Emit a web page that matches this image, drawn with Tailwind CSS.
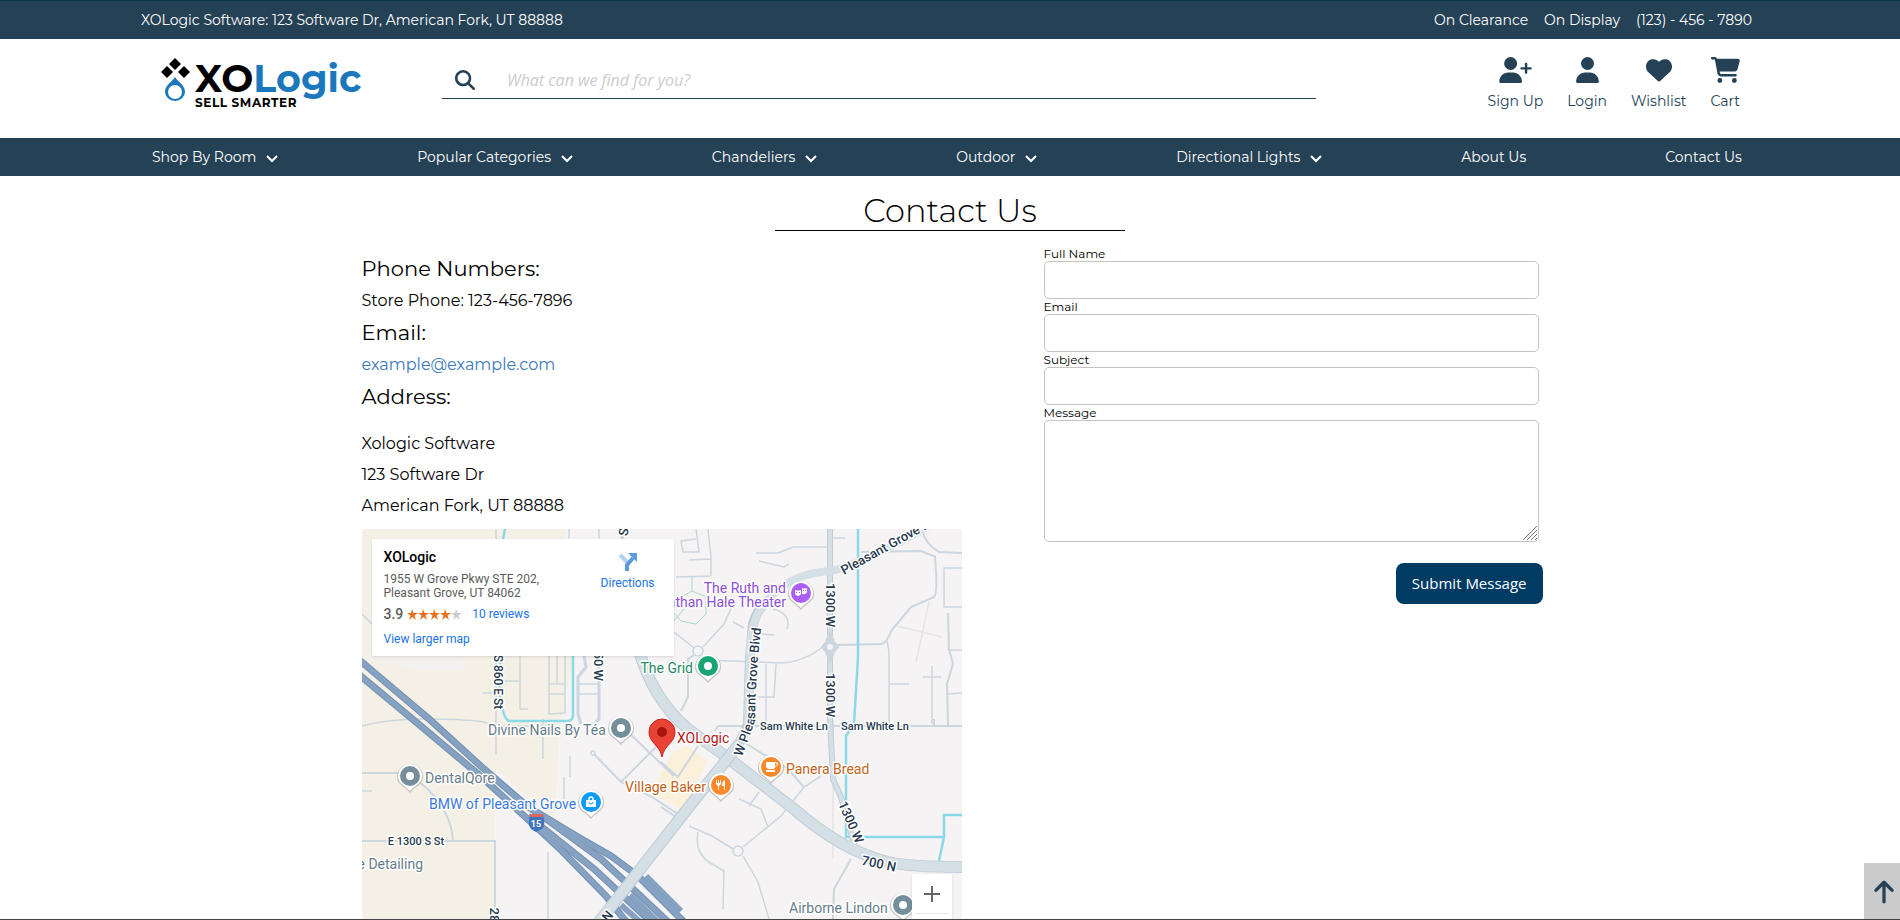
<!DOCTYPE html>
<html lang="en">
<head>
  <meta charset="UTF-8">
  <meta name="viewport" content="width=device-width, initial-scale=1.0">
  <title>Contact Us | XOLogic</title>
  <script src="https://cdn.jsdelivr.net/npm/@tailwindcss/browser@4"></script>
</head>
<body class="bg-white text-black font-[Montserrat,Inter,sans-serif]">
<div class="h-screen overflow-hidden">

  <!-- Top bar -->
  <div class="flex h-[39px] items-center justify-between border-t border-[#0c3443] bg-[#254156] pr-[148px] pl-[141px] text-sm text-white">
    <span>XOLogic Software: 123 Software Dr, American Fork, UT 88888</span>
    <div class="flex gap-4">
      <a href="#">On Clearance</a>
      <a href="#">On Display</a>
      <a href="#">(123) - 456 - 7890</a>
    </div>
  </div>

  <!-- Header -->
  <header class="flex h-[99px] items-start px-40 pt-[18px] text-[#254156]">
    <a href="#" aria-label="XOLogic" class="block shrink-0">
      <svg class="h-[56px] w-[202px] overflow-visible" viewBox="0 0 202 56">
        <g fill="#000">
          <path d="M15 1l6 6-6 6-6-6z"/>
          <path d="M7 9l6 6-6 6-6-6z"/>
          <path d="M24 9l6 6-6 6-6-6z"/>
        </g>
        <path fill="#1b78bd" fill-rule="evenodd" d="M15 20c3 5 10 8 10 15a10 9 0 0 1-20 0c0-7 7-10 10-15zm0 8a7 7 0 1 0 0 14 7 7 0 1 0 0-14z"/>
        <text x="35" y="35" font-family="Montserrat, Lato, sans-serif" font-weight="700" font-size="38">XO<tspan fill="#1b78bd">Logic</tspan></text>
        <text x="35" y="50" font-family="Montserrat, Lato, sans-serif" font-weight="700" font-size="12" class="tracking-wider">SELL SMARTER</text>
      </svg>
    </a>
    <form class="mr-[172px] ml-20 flex h-[42px] flex-1 items-center border-b border-[#254156] pt-1 pl-[13px]">
      <button type="button" aria-label="Search">
        <svg class="size-5" viewBox="0 0 512 512" fill="currentColor"><path d="M416 208c0 45.900-14.900 88.300-40 122.700L502.600 457.400c12.500 12.500 12.500 32.800 0 45.300s-32.800 12.500-45.300 0L330.700 376c-34.400 25.200-76.800 40-122.700 40C93.100 416 0 322.900 0 208S93.100 0 208 0S416 93.100 416 208zM208 352a144 144 0 1 0 0-288 144 144 0 1 0 0 288z"/></svg>
      </button>
      <input type="text" aria-label="Search products" placeholder="What can we find for you?" class="ml-8 flex-1 font-['Open_Sans',sans-serif] text-base italic outline-none placeholder:text-[#cccccc]">
    </form>
    <nav class="flex gap-6 text-sm">
      <a href="#" class="flex flex-col items-center gap-2">
        <svg class="h-[26px] w-[33px]" viewBox="0 0 640 512" fill="currentColor"><path d="M96 128a128 128 0 1 1 256 0A128 128 0 1 1 96 128zM0 482.300C0 383.800 79.800 304 178.300 304h91.400C368.200 304 448 383.800 448 482.300c0 16.400-13.300 29.700-29.700 29.700H29.700C13.300 512 0 498.700 0 482.300zM504 312V248H440c-13.300 0-24-10.700-24-24s10.700-24 24-24h64V136c0-13.300 10.700-24 24-24s24 10.700 24 24v64h64c13.300 0 24 10.700 24 24s-10.700 24-24 24H552v64c0 13.300-10.700 24-24 24s-24-10.700-24-24z"/></svg>
        Sign Up
      </a>
      <a href="#" class="flex flex-col items-center gap-2">
        <svg class="h-[26px] w-[23px]" viewBox="0 0 448 512" fill="currentColor"><path d="M224 256A128 128 0 1 0 224 0a128 128 0 1 0 0 256zm-45.700 48C79.800 304 0 383.800 0 482.300C0 498.700 13.300 512 29.700 512H418.300c16.400 0 29.700-13.300 29.700-29.700C448 383.800 368.200 304 269.700 304H178.300z"/></svg>
        Login
      </a>
      <a href="#" class="flex flex-col items-center gap-2">
        <svg class="size-[26px]" viewBox="0 0 512 512" fill="currentColor"><path d="M47.600 300.400L228.300 469.100c7.500 7 17.400 10.900 27.700 10.900s20.200-3.900 27.700-10.900L464.400 300.400c30.400-28.300 47.600-68 47.600-109.500v-5.800c0-69.900-50.500-129.500-119.400-141C347 36.500 300.600 51.400 268 84L256 96 244 84c-32.600-32.600-79-47.500-124.600-39.900C50.500 55.600 0 115.200 0 185.100v5.800c0 41.500 17.200 81.200 47.600 109.500z"/></svg>
        Wishlist
      </a>
      <a href="#" class="flex flex-col items-center gap-2">
        <svg class="h-[26px] w-[29px]" viewBox="0 0 576 512" fill="currentColor"><path d="M0 24C0 10.700 10.700 0 24 0H69.500c22 0 41.500 12.800 50.600 32h411c26.300 0 45.500 25 38.600 50.400l-41 152.300c-8.500 31.400-37 53.300-69.500 53.300H170.700l5.400 28.500c2.200 11.300 12.100 19.500 23.600 19.500H488c13.300 0 24 10.700 24 24s-10.700 24-24 24H199.700c-34.600 0-64.300-24.600-70.700-58.500L77.400 54.500c-.7-3.800-4-6.500-7.900-6.500H24C10.700 48 0 37.300 0 24zM128 464a48 48 0 1 1 96 0 48 48 0 1 1 -96 0zm336-48a48 48 0 1 1 0 96 48 48 0 1 1 0-96z"/></svg>
        Cart
      </a>
    </nav>
  </header>

  <!-- Category menu -->
  <nav class="flex h-[38px] items-center justify-between bg-[#254156] pr-[158px] pl-[152px] text-sm text-white">
    <a href="#" class="flex items-center gap-[10px]">Shop By Room <svg class="mt-1 h-2 w-3" viewBox="0 0 12 8" fill="none" stroke="currentColor" stroke-width="2"><path d="M1 1l5 5 5-5"/></svg></a>
    <a href="#" class="flex items-center gap-[10px]">Popular Categories <svg class="mt-1 h-2 w-3" viewBox="0 0 12 8" fill="none" stroke="currentColor" stroke-width="2"><path d="M1 1l5 5 5-5"/></svg></a>
    <a href="#" class="flex items-center gap-[10px]">Chandeliers <svg class="mt-1 h-2 w-3" viewBox="0 0 12 8" fill="none" stroke="currentColor" stroke-width="2"><path d="M1 1l5 5 5-5"/></svg></a>
    <a href="#" class="flex items-center gap-[10px]">Outdoor <svg class="mt-1 h-2 w-3" viewBox="0 0 12 8" fill="none" stroke="currentColor" stroke-width="2"><path d="M1 1l5 5 5-5"/></svg></a>
    <a href="#" class="flex items-center gap-[10px]">Directional Lights <svg class="mt-1 h-2 w-3" viewBox="0 0 12 8" fill="none" stroke="currentColor" stroke-width="2"><path d="M1 1l5 5 5-5"/></svg></a>
    <a href="#">About Us</a>
    <a href="#">Contact Us</a>
  </nav>

  <main>
    <h1 class="mx-auto mt-4 w-[350px] border-b border-black text-center text-[32px] leading-[38px] font-light">Contact Us</h1>

    <div class="flex justify-center gap-[82px] pt-[15px]">
      <!-- Store details -->
      <section class="w-[600px] pt-[6px]">
        <h2 class="text-[21px] leading-[34px]">Phone Numbers:</h2>
        <p class="leading-[30px]">Store Phone: 123-456-7896</p>
        <h2 class="text-[21px] leading-[34px]">Email:</h2>
        <p class="leading-[30px]"><a href="mailto:example@example.com" class="text-[#3b78bb]">example@example.com</a></p>
        <h2 class="text-[21px] leading-[34px]">Address:</h2>
        <address class="pt-[14px] leading-[31px] not-italic">
          Xologic Software<br>
          123 Software Dr<br>
          American Fork, UT 88888
        </address>

        <!-- Map -->
        <div class="relative mt-2 h-[450px] overflow-hidden bg-[#f5f3f4] font-[Roboto,sans-serif]">
          <svg class="h-[450px] w-[600px]" viewBox="0 0 600 450">
            <defs>
              <g id="pin">
                <path d="M-13 0a13 13 0 1 1 26 0c0 8-8 9-13 16c-5-7-13-8-13-16z" fill="#8a8a8a" opacity=".45" transform="translate(0 1)"/>
                <path d="M-12 0a12 12 0 1 1 24 0c0 8-7 9-12 15c-5-6-12-7-12-15z" fill="#fff"/>
                <circle r="10" fill="currentColor"/>
              </g>
              <path id="blvd" d="M380 228L393 192Q394 130 402 80"/>
            </defs>

            <!-- land areas -->
            <path fill="#f5f0e5" d="M0 0H203L212 127L199 190L192 290L133 240V450H0z"/>
            <path fill="#f3f1ef" d="M0 125H95Q112 143 90 142Q40 142 0 128z"/>
            <path fill="#fbf0d9" d="M310 224L325 217L345 232L322 282L289 264z"/>

            <!-- minor roads -->
            <g fill="none" stroke="#cbd6df" stroke-width="1.500">
              <path d="M134 0V225M207 0V12M237 0V12M158 127V180M158 152H136M121 164H136M158 180H166M187 127V185L203 184V127M187 165H203M195 127V155M187 155H203M0 85L10 95"/>
              <path stroke-width="3" d="M256 0L262 12M222 127L224 138L216 148V185L219 195M237 127V190L232 196"/>
              <path d="M216 155H237M217 165H237M0 197Q26 190 60 190T100 191Q120 191 135 197H192M186 323V450M202 248V270M208 227V248M181 190V230M0 262H10"/>
              <path stroke-width="2" d="M0 244H40L60 255Q89 280 91 312M0 312H133V450M266 203L312 247M259 253L299 213M232 225L259 253L290 268L319 287M299 233L316 248L336 217M317 290L299 278"/>
              <circle cx="231" cy="224" r="2"/>
              <path d="M327 297L350 307L371 320M381 318L419 287L442 258L459 247M336 303Q332 325 350 335L362 342L361 380M381 327L396 353L407 390M377 270L399 280L406 298M387 277L397 263"/>
              <path stroke-width="2" d="M442 258L426 240L396 222L380 212M489 330L472 360L471 390M356 197H600M356 197L353 202M572 190V197M586 190V197"/>
              <circle cx="376" cy="322" r="5"/>
              <path d="M346 0L349 28V47M334 0L337 23H321L319 12L334 10M327 31L349 30M314 48L349 47M394 24H416L431 18H466M397 32L422 38L427 35M471 9H483"/>
              <circle cx="336" cy="122" r="5"/>
              <path d="M312 103L332 119M341 118L362 95L371 75M342 131L419 134Q442 133 462 117M371 93L382 99M394 105L412 106M411 80Q430 85 425 100M404 135V195M414 135L412 168H396"/>
              <path stroke-width="2" d="M332 126L326 130V168L319 182M474 116L520 115Q526 112 529 102L549 78L572 68Q576 66 573 28M499 23L559 22L574 28M560 0Q563 15 577 23L600 24"/>
              <path d="M600 39H582V78H600M600 121H586M585 165L600 164M525 112L527 122V195M527 155H547M570 137V195M561 148H579"/>
              <path stroke-width="2" d="M586 84L587 120L591 135L585 155L586 195"/>
              <path stroke="#e4e4e6" d="M535 97L580 108M567 73L554 133M471 190V330"/>
            </g>
            <path fill="none" stroke="#a9dcc3" d="M330 48V62L344 68V85L334 95L319 92L308 80M330 62L312 72M312 92L322 80"/>

            <!-- canals -->
            <g fill="none" stroke="#8bd9e6" stroke-width="2.500">
              <path d="M143 0L139 20L138 165Q141 192 148 192H205Q211 192 211 186V127"/>
              <path d="M496 0V128L492 195L484 207V308H582V286H600M582 308L577 332"/>
            </g>

            <!-- main roads -->
            <g fill="none" stroke-linejoin="round">
              <g stroke="#c0ccd6">
                <path stroke-width="6" d="M468 0V190L471 250L479 268L494 322"/>
                <path stroke-width="12" d="M276 118Q290 170 326 200L366 229L432 280Q480 322 526 333Q550 338 600 338"/>
                <path stroke-width="10" d="M376 217L386 195L388 128L391 95Q396 78 406 72"/>
              </g>
              <g stroke="#d5dfe6">
                <path stroke-width="4" d="M468 0V190L471 250L479 268L494 322"/>
                <path stroke-width="8" d="M386 195L388 128Q388 88 406 70Q430 44 469 42Q499 36 570 -5"/>
                <path stroke-width="10" d="M276 118Q290 170 326 200L366 229L432 280Q480 322 526 333Q550 338 600 338"/>
              </g>
            </g>
            <path d="M468 103L472 113L476 118L472 123L468 134L464 123L460 118L464 113z" fill="#cbd6df" stroke="#cbd6df" stroke-width="2"/>
            <circle cx="468" cy="118" r="3" fill="#f5f3f4"/>

            <!-- interstate -->
            <g fill="none" stroke="#7390b2" stroke-width="7">
              <path d="M-5 129L67 190L122 240L166 278L216 308L249 327L276 347L319 390L380 450"/>
              <path d="M-5 144L54 193L116 245L159 284L200 322L244 367L262 390L320 450"/>
              <path d="M166 287L232 340L286 390L350 450"/>
              <path d="M176 284L239 330L303 390L365 450"/>
            </g>
            <g fill="none" stroke="#86a2c3" stroke-width="5">
              <path d="M-5 129L67 190L122 240L166 278L216 308L249 327L276 347L319 390L380 450"/>
              <path d="M-5 144L54 193L116 245L159 284L200 322L244 367L262 390L320 450"/>
              <path d="M166 287L232 340L286 390L350 450"/>
              <path d="M176 284L239 330L303 390L365 450"/>
            </g>
            <path d="M230 402L319 288L366 229L378 214" fill="none" stroke="#c0ccd6" stroke-width="12"/>
            <path d="M230 402L319 288L366 229L378 214" fill="none" stroke="#d5dfe6" stroke-width="10"/>
            <path d="M259 376L286 400M268 366L300 397M284 347L319 382" fill="none" stroke="#86a2c3" stroke-width="6"/>

            <!-- road names -->
            <g fill="#27394d" stroke="#fff" stroke-width="3" stroke-linejoin="round" paint-order="stroke" font-size="13" font-weight="500" text-anchor="middle">
              <text transform="translate(464 76) rotate(90)">1300 W</text>
              <text transform="translate(464 166) rotate(90)">1300 W</text>
              <text transform="translate(485 295) rotate(66)">1300 W</text>
              <text transform="translate(516 339) rotate(12)">700 N</text>
              <text transform="translate(482 46) rotate(-29)" text-anchor="start">Pleasant Grove Blvd</text>
              <text transform="translate(232 152) rotate(90)" text-anchor="end">950 W</text>
              <text transform="translate(257 2) rotate(100)">S</text>
              <text transform="translate(128 386) rotate(90)">28</text>
              <text transform="translate(249 390) rotate(-50)">N</text>
              <text text-anchor="start"><textPath href="#blvd">W Pleasant Grove Blvd</textPath></text>
              <g font-size="11">
                <text x="432" y="201">Sam White Ln</text>
                <text x="513" y="201">Sam White Ln</text>
                <text x="54" y="316">E 1300 S St</text>
              </g>
              <text transform="translate(132 153) rotate(90)" font-size="12">S 860 E St</text>
            </g>

            <!-- interstate shield -->
            <path d="M168 286h13q3 10-1 14l-6 3-5-3q-4-5-1-14z" fill="#3f76bd"/>
            <path d="M168 285h13v3h-13z" fill="#e0665c"/>
            <text x="174" y="298" fill="#fff" font-size="9" font-weight="700" text-anchor="middle">15</text>

            <!-- place names -->
            <g stroke="#fff" stroke-width="3" stroke-linejoin="round" paint-order="stroke" font-size="14">
              <g fill="#8d4ed8" text-anchor="end"><text x="424" y="64">The Ruth and</text><text x="424" y="78">Jonathan Hale Theater</text></g>
              <text x="331" y="144" fill="#258a68" text-anchor="end">The Grid</text>
              <g fill="#667c89">
                <text x="126" y="206">Divine Nails By Téa</text>
                <text x="63" y="254">DentalQore</text>
                <text x="61" y="340" text-anchor="end">e Detailing</text>
                <text x="427" y="384">Airborne Lindon</text>
              </g>
              <text x="67" y="280" fill="#3b78e0">BMW of Pleasant Grove</text>
              <text x="315" y="214" fill="#b02020">XOLogic</text>
              <g fill="#c5621a"><text x="263" y="263">Village Baker</text><text x="424" y="245">Panera Bread</text></g>
            </g>

            <!-- pins -->
            <g fill="#fff">
              <g transform="translate(346 137)" class="text-[#1aa673]"><use href="#pin"/><circle r="4"/></g>
              <g transform="translate(259 199)" class="text-[#748e9b]"><use href="#pin"/><circle r="4"/></g>
              <g transform="translate(48 247)" class="text-[#748e9b]"><use href="#pin"/><circle r="4"/></g>
              <g transform="translate(541 376)" class="text-[#748e9b]"><use href="#pin"/><circle r="4"/></g>
              <g transform="translate(439 64)" class="text-[#a95ff5]"><use href="#pin"/><path d="M-6-3q3 1 6 0v4q-3 4-6 0zM1-5q3 1 5 0v4q-1 3-5 2z"/><path d="M-5-1h1v1h-1zM-2-1h1v1h-1zM2-3h1v1h-1zM4-3h1v1h-1z" fill="#a95ff5"/></g>
              <g transform="translate(229 273)" class="text-[#0c9bfb]"><use href="#pin"/><path d="M-5-2h10v7H-5z"/><path d="M-2-2v-1a2 2 0 0 1 4 0v1" fill="none" stroke="#fff" stroke-width="1.500"/><path d="M-2 0a2 2 0 0 0 4 0" fill="none" stroke="#0c9bfb"/></g>
              <g transform="translate(359 256)" class="text-[#fb8829]"><use href="#pin"/><path d="M-5-5h1v3h1v-3h1v3h1v-3h1v4l-2 2v4h-1v-4l-2-2zM4-5v10H3V1H1q0-5 3-6z"/></g>
              <g transform="translate(409 238)" class="text-[#fb8829]"><use href="#pin"/><path d="M-5-5h9q3 0 3 2t-3 3q0 2-3 2h-3q-3 0-3-3zM4-4v3q2 0 2-2zM-5 3h9v2h-9z" fill-rule="evenodd"/></g>
            </g>
            <path d="M300 228c-2-12-13-14-13-25a13 13 0 1 1 26 0c0 11-11 13-13 25z" fill="#e94335" stroke="#c5221f"/>
            <circle cx="300" cy="203" r="5" fill="#a8150f"/>
          </svg>

          <!-- Place card -->
          <div class="absolute top-[10px] left-[10px] flex h-[117px] w-[302px] justify-between rounded-xs bg-white pt-[10px] pr-[19px] pl-3 text-xs shadow">
            <div>
              <p class="text-sm leading-4 font-medium">XOLogic</p>
              <p class="mt-[7px] leading-[14px] text-[#5b5b5b]">1955 W Grove Pkwy STE 202,<br>Pleasant Grove, UT 84062</p>
              <div class="mt-1 flex items-center leading-[18px]">
                <span class="text-sm font-medium text-[#5b5b5b]">3.9</span>
                <svg class="ml-1 h-[11px] w-[55px]" viewBox="0 0 55 11">
                  <defs><path id="star" d="M5 0l1.500 4H11L7.500 6.500 9 11 5.500 8 2 11 3.500 6.500 0 4h4z"/></defs>
                  <g fill="#e7711b"><use href="#star"/><use href="#star" x="11"/><use href="#star" x="22"/><use href="#star" x="33"/></g>
                  <use href="#star" x="44" fill="#ccc"/>
                </svg>
                <a href="#" class="ml-[10px] text-[#1a73e8]">10 reviews</a>
              </div>
              <a href="#" class="mt-[7px] block leading-4 text-[#1a73e8]">View larger map</a>
            </div>
            <a href="#" class="flex flex-col items-center gap-1 pt-1 text-[#1a73e8]">
              <svg class="size-[18px]" viewBox="0 0 18 18" fill="none" stroke-width="4">
                <path d="M1 2l7 7" stroke="#b5d0f0"/>
                <path d="M8 18v-6l6-7" stroke="#5b9be0"/>
                <path d="M9 0h9v9z" fill="#5b9be0"/>
              </svg>
              Directions
            </a>
          </div>

          <!-- Zoom control -->
          <div class="absolute top-[345px] right-[10px] w-10 divide-y divide-gray-200 bg-white px-1 shadow">
            <button type="button" aria-label="Zoom in" class="flex h-10 w-full items-center justify-center">
              <svg class="size-4" viewBox="0 0 16 16" stroke="#666" stroke-width="2"><path d="M8 0v16M0 8h16"/></svg>
            </button>
            <button type="button" aria-label="Zoom out" class="flex h-10 w-full items-center justify-center">
              <svg class="size-4" viewBox="0 0 16 16" stroke="#666" stroke-width="2"><path d="M0 8h16"/></svg>
            </button>
          </div>
        </div>
      </section>

      <!-- Contact form -->
      <form class="flex w-[495px] flex-col text-xs leading-[15px]">
        <label for="name">Full Name</label>
        <input id="name" type="text" class="h-[38px] rounded-[5px] border border-[#c4c4c4] px-2">
        <label for="email">Email</label>
        <input id="email" type="email" class="h-[38px] rounded-[5px] border border-[#c4c4c4] px-2">
        <label for="subject">Subject</label>
        <input id="subject" type="text" class="h-[38px] rounded-[5px] border border-[#c4c4c4] px-2">
        <label for="message">Message</label>
        <div class="relative flex">
          <textarea id="message" class="h-[122px] flex-1 resize-none rounded-[5px] border border-[#c4c4c4] p-2"></textarea>
          <svg class="pointer-events-none absolute right-[2px] bottom-[2px] size-[14px]" viewBox="0 0 14 14" stroke="#777"><path d="M0 14L14 0M4 14L14 4M8 14L14 8M12 14L14 12"/></svg>
        </div>
        <button type="button" class="mt-[21px] -mr-1 h-[41px] self-end rounded-lg bg-[#003b64] px-4 font-['Open_Sans',sans-serif] text-[15px] text-white">Submit Message</button>
      </form>
    </div>
  </main>

  <!-- Back to top -->
  <a href="#" aria-label="Back to top" class="fixed right-0 bottom-0 flex h-[57px] w-9 items-center justify-center bg-[#cbcbcb] pl-1 text-[#254156]">
    <svg class="h-[26px] w-5" viewBox="0 0 384 512" fill="currentColor"><path d="M214.600 41.400c-12.500-12.500-32.800-12.500-45.300 0l-160 160c-12.500 12.500-12.500 32.800 0 45.300s32.800 12.500 45.300 0L160 141.200V448c0 17.700 14.300 32 32 32s32-14.300 32-32V141.200L329.400 246.600c12.500 12.500 32.800 12.500 45.300 0s12.500-32.800 0-45.300l-160-160z"/></svg>
  </a>
  <div class="fixed inset-x-0 bottom-0 h-px bg-[#444]"></div>

</div>
</body>
</html>
